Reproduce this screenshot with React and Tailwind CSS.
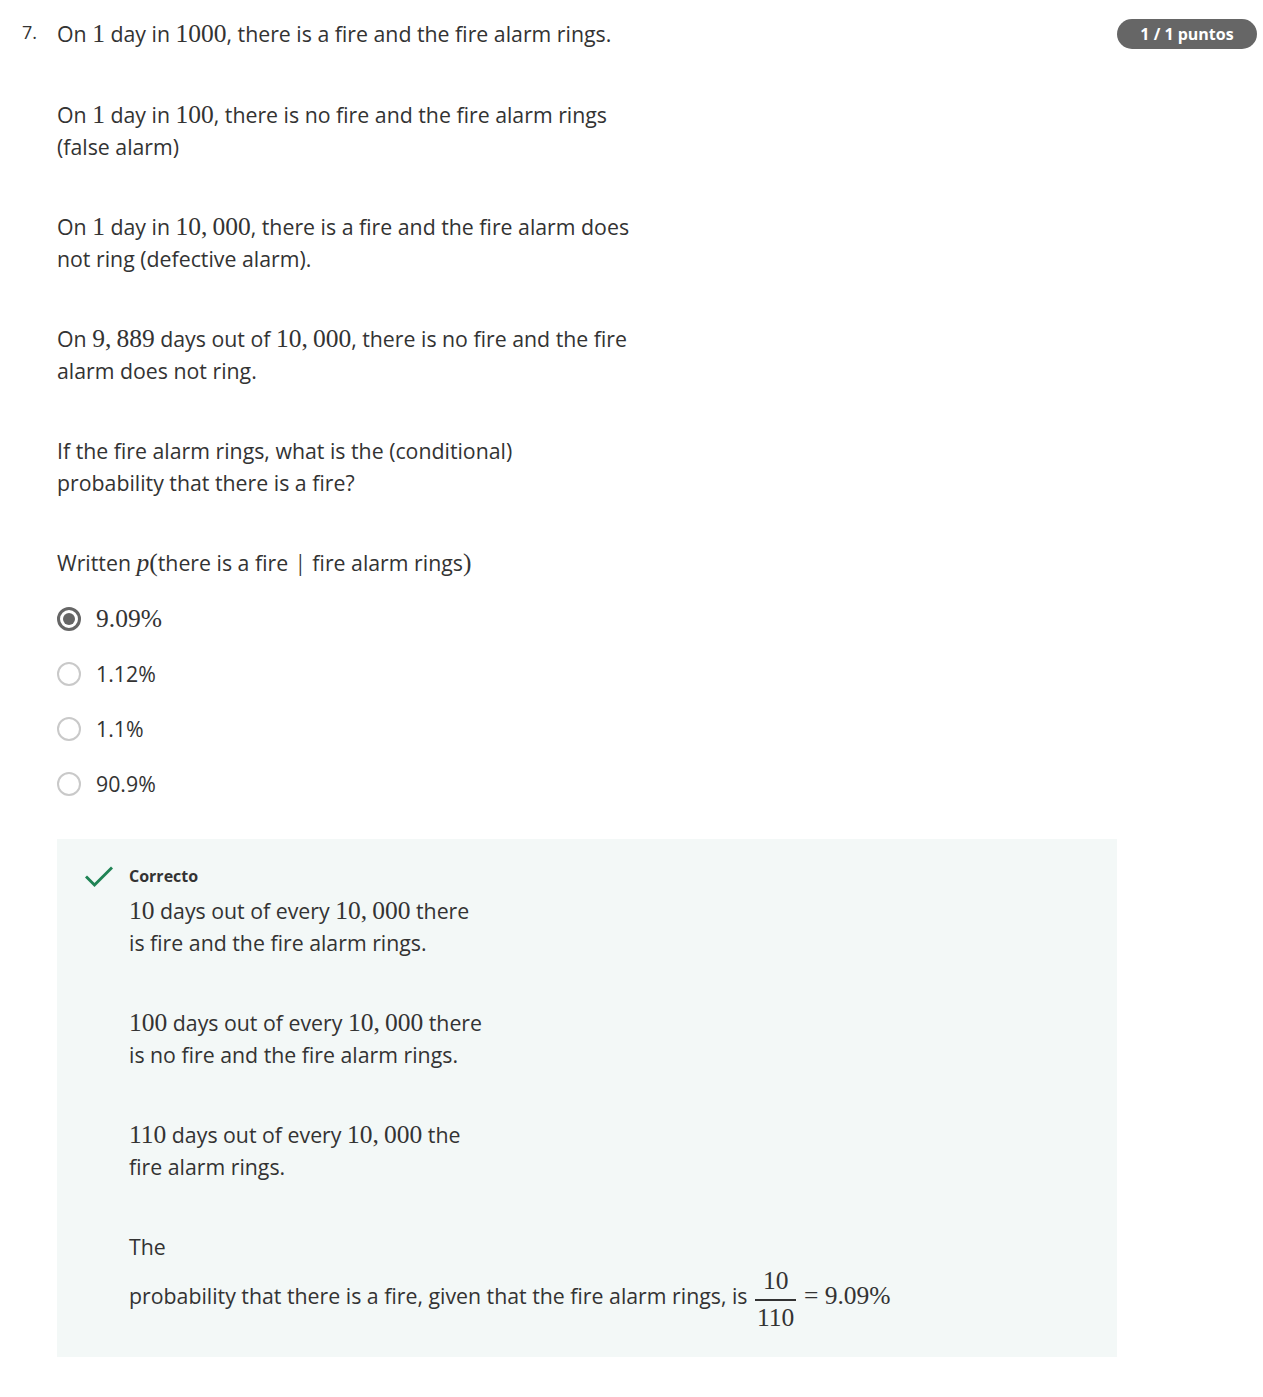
import React from 'react';

const M = ({ children, className = '' }) => (
  <span className={`font-['Liberation_Serif',serif] text-[25.5px] ${className}`}>{children}</span>
);

function Radio({ checked }) {
  if (checked) {
    return (
      <span className="w-6 h-6 rounded-full border-[3px] border-[#666] flex items-center justify-center shrink-0">
        <span className="w-3 h-3 rounded-full bg-[#666]" />
      </span>
    );
  }
  return <span className="w-6 h-6 rounded-full border-2 border-[#c9c9c9] shrink-0" />;
}

export default function App() {
  const options = [
    { label: <M>9.09%</M>, checked: true },
    { label: '1.12%' },
    { label: '1.1%' },
    { label: '90.9%' },
  ];

  return (
    <div className="w-[1263px] min-h-[1397px] bg-white text-[#333] font-['Open_Sans',sans-serif]">
      <div className="flex pt-[18px] pr-[6px]">
        {/* Question number */}
        <div className="w-[57px] pl-[22px] text-[18px] leading-[28px] text-[#333]">7.</div>

        {/* Question body */}
        <div className="flex-1 text-[21.3px] leading-[32px]">
          <p className="mb-[49px]">
            On <M>1</M> day in <M>1000</M>, there is a fire and the fire alarm rings.
          </p>
          <p className="mb-12">
            On <M>1</M> day in <M>100</M>, there is no fire and the fire alarm rings
            <br />
            (false alarm)
          </p>
          <p className="mb-12">
            On <M>1</M> day in <M>10,&thinsp;000</M>, there is a fire and the fire alarm does
            <br />
            not ring (defective alarm).
          </p>
          <p className="mb-12">
            On <M>9,&thinsp;889</M> days out of <M>10,&thinsp;000</M>, there is no fire and the fire
            <br />
            alarm does not ring.
          </p>
          <p className="mb-12">
            If the fire alarm rings, what is the (conditional)
            <br />
            probability that there is a fire?
          </p>
          <p className="mb-[12px]">
            Written <M className="italic">p</M>
            <M>(</M>there is a fire <M className="mx-[4px]">|</M> fire alarm rings<M>)</M>
          </p>

          {/* Options */}
          <div className="flex flex-col">
            {options.map((o, i) => (
              <label key={i} className="flex items-center gap-[15px] h-[55px]">
                <Radio checked={o.checked} />
                <span>{o.label}</span>
              </label>
            ))}
          </div>

          {/* Feedback */}
          <div className="mt-[28px] w-[1060px] bg-[#f3f8f7] pl-7 pt-6 pb-[22px] flex gap-4">
            <svg width="28" height="28" viewBox="0 0 28 28" className="shrink-0" fill="none">
              <path d="M2 14.5l7.5 7.5L26 5.5" stroke="#1f8354" strokeWidth="3" strokeLinecap="square" />
            </svg>
            <div>
              <div className="text-[16px] leading-[26px] font-bold text-[#333]">Correcto</div>
              <div className="mt-[6px]">
                <p className="mb-12">
                  <M>10</M> days out of every <M>10,&thinsp;000</M> there
                  <br />
                  is fire and the fire alarm rings.
                </p>
                <p className="mb-12">
                  <M>100</M> days out of every <M>10,&thinsp;000</M> there
                  <br />
                  is no fire and the fire alarm rings.
                </p>
                <p className="mb-12">
                  <M>110</M> days out of every <M>10,&thinsp;000</M> the
                  <br />
                  fire alarm rings.
                </p>
                <p>
                  The
                  <br />
                  probability that there is a fire, given that the fire alarm rings, is{' '}
                  <span className="inline-flex flex-col items-center align-middle font-['Liberation_Serif',serif] text-[25.5px] px-[2px]">
                    <span className="px-[2px] leading-[36px]">10</span>
                    <span className="w-full h-[1.5px] bg-[#333]" />
                    <span className="px-[2px] leading-[34px]">110</span>
                  </span>{' '}
                  <M>= 9.09%</M>
                </p>
              </div>
            </div>
          </div>
        </div>

        {/* Points badge */}
        <div className="w-[140px] shrink-0">
          <div className="mt-px h-[30px] rounded-full bg-[#666] text-white text-[16px] font-bold flex items-center justify-center">
            1 / 1 puntos
          </div>
        </div>
      </div>
    </div>
  );
}
